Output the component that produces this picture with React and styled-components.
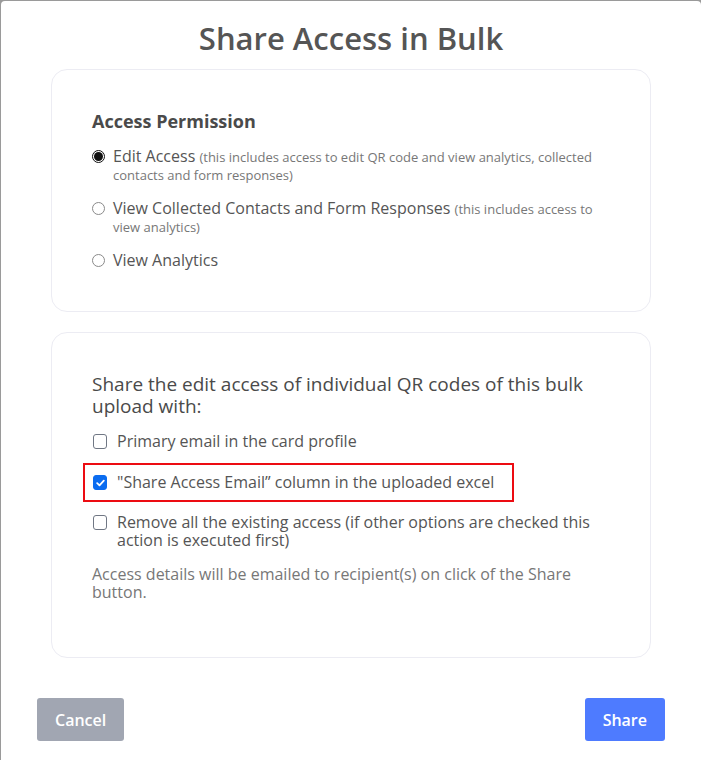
import React from "react";
import styled, { createGlobalStyle } from "styled-components";

const Global = createGlobalStyle`
  html, body { margin: 0; padding: 0; background: #9a9a9a; }
  body { font-family: "Open Sans", "Noto Sans", Arial, sans-serif; }
  * { box-sizing: border-box; }
`;

const Modal = styled.div`
  margin: 1px 0 0 1px;
  width: 700px;
  height: 759px;
  background: #fff;
  border-radius: 4px 4px 0 0;
  padding: 19px 50px 0;
  display: flex;
  flex-direction: column;
`;

const Title = styled.h1`
  margin: 0 0 13px;
  text-align: center;
  font-size: 31px;
  line-height: 36px;
  font-weight: 600;
  color: #555;
`;

const Card = styled.section`
  border: 1px solid #ececf3;
  border-radius: 16px;
  padding: 40px 40px ${(p) => p.$bottom || 40}px;
  margin-top: ${(p) => p.$mt || 0}px;
  display: flex;
  flex-direction: column;
`;

const Heading = styled.h2`
  margin: 0;
  font-size: ${(p) => p.$size || 18}px;
  line-height: 22px;
  font-weight: ${(p) => p.$weight || 700};
  color: #4a4a4a;
`;

const OptionRow = styled.label`
  display: flex;
  align-items: flex-start;
  gap: ${(p) => p.$gap || 8}px;
  margin-top: ${(p) => p.$mt || 0}px;
  font-size: 16px;
  line-height: 18px;
  color: #555;
`;

const Radio = styled.span`
  flex: none;
  width: 13px;
  height: 13px;
  margin-top: 3px;
  border-radius: 50%;
  border: 1px solid ${(p) => (p.$on ? "#111" : "#8a8a8a")};
  background: #fff;
  display: flex;
  align-items: center;
  justify-content: center;
  &::after {
    content: "";
    display: ${(p) => (p.$on ? "block" : "none")};
    width: 9px;
    height: 9px;
    border-radius: 50%;
    background: #111;
  }
`;

const Check = styled.span`
  flex: none;
  width: 14px;
  height: 15px;
  margin-top: 2px;
  margin-left: 1px;
  border-radius: 3px;
  border: 1px solid ${(p) => (p.$on ? "#0b6cf0" : "#707784")};
  background: ${(p) => (p.$on ? "#0b6cf0" : "#fff")};
  display: flex;
  align-items: center;
  justify-content: center;
`;

const Small = styled.span`
  font-size: 13px;
  line-height: 14px;
  color: #777;
`;

const Highlight = styled.div`
  align-self: flex-start;
  margin: 13px 0 0 -9px;
  padding: 8px 18px 9px 7px;
  border: 2px solid #ec0c12;
`;

const Note = styled.p`
  margin: 16px 0 0;
  font-size: 16px;
  line-height: 18px;
  color: #777;
`;

const Footer = styled.div`
  margin: 40px -14px 0;
  display: flex;
  justify-content: space-between;
`;

const Button = styled.button`
  height: 43px;
  padding: 0 18px;
  border: none;
  border-radius: 3px;
  background: ${(p) => (p.$primary ? "#4e7bff" : "#a1a6b2")};
  color: #fff;
  font-family: inherit;
  font-size: 16px;
  font-weight: 600;
`;

const CheckMark = () => (
  <svg width="9" height="8" viewBox="0 0 9 8">
    <path d="M1.2 4.2 L3.5 6.3 L7.8 1.6" fill="none" stroke="#fff" strokeWidth="1.8" strokeLinecap="round" strokeLinejoin="round" />
  </svg>
);

export default function App() {
  return (
    <>
      <Global />
      <Modal>
        <Title>Share Access in Bulk</Title>
        <Card $bottom={42}>
          <Heading>Access Permission</Heading>
          <OptionRow $mt={15}>
            <Radio $on />
            <span>
              Edit Access <Small>(this includes access to edit QR code and view analytics, collected contacts and form responses)</Small>
            </span>
          </OptionRow>
          <OptionRow $mt={16}>
            <Radio />
            <span>
              View Collected Contacts and Form Responses <Small>(this includes access to view analytics)</Small>
            </span>
          </OptionRow>
          <OptionRow $mt={16}>
            <Radio />
            <span>View Analytics</span>
          </OptionRow>
        </Card>
        <Card $mt={20} $bottom={56}>
          <Heading $size={19} $weight={500}>
            Share the edit access of individual QR codes of this bulk upload with:
          </Heading>
          <OptionRow $gap={10} $mt={15}>
            <Check />
            <span>Primary email in the card profile</span>
          </OptionRow>
          <Highlight>
            <OptionRow $gap={10}>
              <Check $on>
                <CheckMark />
              </Check>
              <span>"Share Access Email” column in the uploaded excel</span>
            </OptionRow>
          </Highlight>
          <OptionRow $gap={10} $mt={11}>
            <Check />
            <span>Remove all the existing access (if other options are checked this action is executed first)</span>
          </OptionRow>
          <Note>
            Access details will be emailed to recipient(s) on click of the Share button.
          </Note>
        </Card>
        <Footer>
          <Button>Cancel</Button>
          <Button $primary>Share</Button>
        </Footer>
      </Modal>
    </>
  );
}
